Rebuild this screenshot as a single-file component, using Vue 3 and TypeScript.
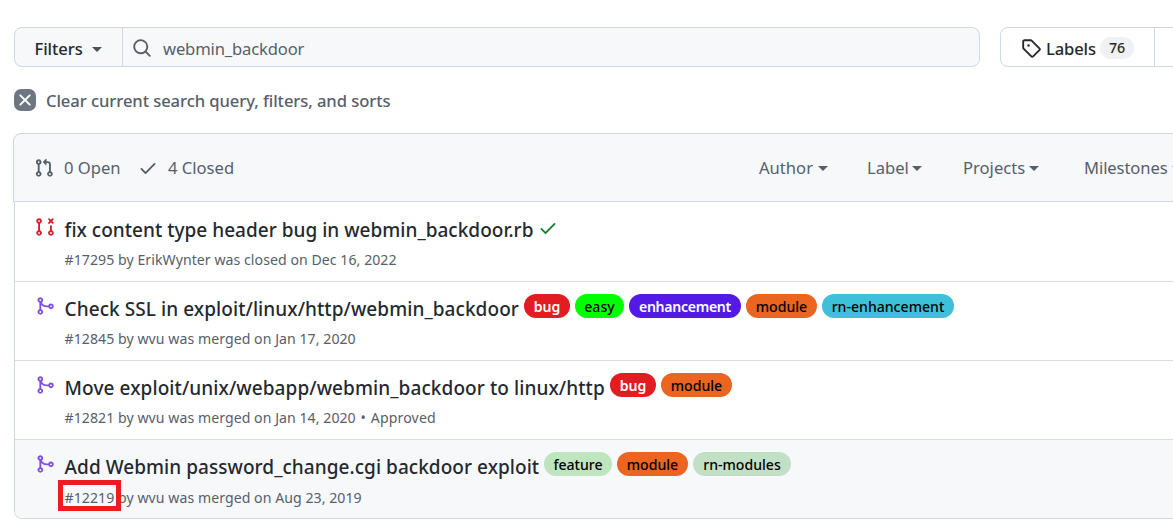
<script setup lang="ts">
interface Tag {
  name: string
  tone: string
}
interface PullRequest {
  id: string
  state: 'closed' | 'merged'
  title: string
  meta: string
  review?: string
  passed?: boolean
  marked?: boolean
  tags: Tag[]
}

const icons = {
  search: 'M10.68 11.74a6 6 0 0 1-7.922-8.982 6 6 0 0 1 8.982 7.922l3.04 3.04a.749.749 0 0 1-.326 1.275.749.749 0 0 1-.734-.215ZM11.5 7a4.499 4.499 0 1 0-8.997 0A4.499 4.499 0 0 0 11.5 7Z',
  tag: 'M1 7.775V2.75C1 1.784 1.784 1 2.75 1h5.025c.464 0 .91.184 1.238.513l6.25 6.25a1.75 1.75 0 0 1 0 2.474l-5.026 5.026a1.75 1.75 0 0 1-2.474 0l-6.25-6.25A1.752 1.752 0 0 1 1 7.775Zm1.5 0c0 .066.026.13.073.177l6.25 6.25a.25.25 0 0 0 .354 0l5.025-5.025a.25.25 0 0 0 0-.354l-6.25-6.25a.25.25 0 0 0-.177-.073H2.75a.25.25 0 0 0-.25.25ZM6 5a1 1 0 1 1 0 2 1 1 0 0 1 0-2Z',
  x: 'M3.72 3.72a.75.75 0 0 1 1.06 0L8 6.94l3.22-3.22a.749.749 0 0 1 1.275.326.749.749 0 0 1-.215.734L9.06 8l3.22 3.22a.749.749 0 0 1-.326 1.275.749.749 0 0 1-.734-.215L8 9.06l-3.22 3.22a.751.751 0 0 1-1.042-.018.751.751 0 0 1-.018-1.042L6.94 8 3.72 4.78a.75.75 0 0 1 0-1.06Z',
  open: 'M1.5 3.25a2.25 2.25 0 1 1 3 2.122v5.256a2.251 2.251 0 1 1-1.5 0V5.372A2.25 2.25 0 0 1 1.5 3.25Zm5.677-.177L9.573.677A.25.25 0 0 1 10 .854V2.5h1A2.5 2.5 0 0 1 13.5 5v5.628a2.251 2.251 0 1 1-1.5 0V5a1 1 0 0 0-1-1h-1v1.646a.25.25 0 0 1-.427.177L7.177 3.427a.25.25 0 0 1 0-.354ZM3.75 2.5a.75.75 0 1 0 0 1.5.75.75 0 0 0 0-1.5Zm0 9.5a.75.75 0 1 0 0 1.5.75.75 0 0 0 0-1.5Zm8.25.75a.75.75 0 1 0 1.5 0 .75.75 0 0 0-1.5 0Z',
  closed: 'M3.25 1A2.25 2.25 0 0 1 4 5.372v5.256a2.251 2.251 0 1 1-1.5 0V5.372A2.251 2.251 0 0 1 3.25 1Zm9.5 5.5a.75.75 0 0 1 .75.75v3.378a2.251 2.251 0 1 1-1.5 0V7.25a.75.75 0 0 1 .75-.75Zm-2.03-5.273a.75.75 0 0 1 1.06 0l.97.97.97-.97a.748.748 0 0 1 1.265.332.75.75 0 0 1-.205.729l-.97.97.97.97a.751.751 0 0 1-.018 1.042.751.751 0 0 1-1.042.018l-.97-.97-.97.97a.749.749 0 0 1-1.275-.326.749.749 0 0 1 .215-.734l.97-.97-.97-.97a.75.75 0 0 1 0-1.06ZM2.5 3.25a.75.75 0 1 0 1.5 0 .75.75 0 0 0-1.5 0ZM3.25 12a.75.75 0 1 0 0 1.5.75.75 0 0 0 0-1.5Zm9.5 0a.75.75 0 1 0 0 1.5.75.75 0 0 0 0-1.5Z',
  merged: 'M5.45 5.154A4.25 4.25 0 0 0 9.25 7.5h1.378a2.251 2.251 0 1 1 0 1.5H9.25A5.734 5.734 0 0 1 5 7.123v3.505a2.25 2.25 0 1 1-1.5 0V5.372a2.25 2.25 0 1 1 1.95-.218ZM4.25 13.5a.75.75 0 1 0 0-1.5.75.75 0 0 0 0 1.5Zm8.5-4.5a.75.75 0 1 0 0-1.5.75.75 0 0 0 0 1.5ZM5 3.25a.75.75 0 1 0-1.5 0 .75.75 0 0 0 1.5 0Z',
  check: 'M13.78 4.22a.75.75 0 0 1 0 1.06l-7.25 7.25a.75.75 0 0 1-1.06 0L2.22 9.28a.751.751 0 0 1 .018-1.042.751.751 0 0 1 1.042-.018L6 10.94l6.72-6.72a.75.75 0 0 1 1.06 0Z',
}

const menus = [
  { name: 'Author', cls: 'author' },
  { name: 'Label', cls: 'label' },
  { name: 'Projects', cls: 'projects' },
  { name: 'Milestones', cls: 'milestones' },
]

const pulls: PullRequest[] = [
  { id: '17295', state: 'closed', title: 'fix content type header bug in webmin_backdoor.rb', meta: 'by ErikWynter was closed on Dec 16, 2022', passed: true, tags: [] },
  {
    id: '12845', state: 'merged', title: 'Check SSL in exploit/linux/http/webmin_backdoor', meta: 'by wvu was merged on Jan 17, 2020',
    tags: [
      { name: 'bug', tone: 'bug' },
      { name: 'easy', tone: 'easy' },
      { name: 'enhancement', tone: 'enhancement' },
      { name: 'module', tone: 'module' },
      { name: 'rn-enhancement', tone: 'rn-enhancement' },
    ],
  },
  {
    id: '12821', state: 'merged', title: 'Move exploit/unix/webapp/webmin_backdoor to linux/http', meta: 'by wvu was merged on Jan 14, 2020', review: '• Approved',
    tags: [
      { name: 'bug', tone: 'bug' },
      { name: 'module', tone: 'module' },
    ],
  },
  {
    id: '12219', state: 'merged', title: 'Add Webmin password_change.cgi backdoor exploit', meta: 'by wvu was merged on Aug 23, 2019', marked: true,
    tags: [
      { name: 'feature', tone: 'feature' },
      { name: 'module', tone: 'module' },
      { name: 'rn-modules', tone: 'rn-modules' },
    ],
  },
]
</script>

<template>
  <main class="page">
    <div class="toolbar">
      <div class="search">
        <button class="filters"><span>Filters</span><i class="caret"></i></button>
        <div class="query">
          <svg class="icon" viewBox="0 0 16 16"><path :d="icons.search" /></svg>
          <span>webmin_backdoor</span>
        </div>
      </div>
      <div class="links">
        <a class="labels">
          <svg class="icon" viewBox="0 0 16 16"><path :d="icons.tag" /></svg>
          <span class="labels-text">Labels</span>
          <span class="count">76</span>
        </a>
      </div>
    </div>

    <a class="clear">
      <span class="clear-badge"><svg viewBox="0 0 16 16"><path :d="icons.x" /></svg></span>
      <span class="clear-text">Clear current search query, filters, and sorts</span>
    </a>

    <section class="list">
      <header class="list-head">
        <svg class="icon" viewBox="0 0 16 16"><path :d="icons.open" /></svg>
        <span class="open-count">0 Open</span>
        <svg class="icon" viewBox="0 0 16 16"><path :d="icons.check" /></svg>
        <span class="closed-count">4 Closed</span>
        <nav class="menus">
          <span v-for="m in menus" :key="m.name" class="menu" :class="m.cls"><span class="menu-name">{{ m.name }}</span><i class="caret"></i></span>
        </nav>
      </header>
      <div class="rows">
        <article v-for="p in pulls" :key="p.id" class="row" :class="['pr-' + p.id, { marked: p.marked }]">
          <svg class="icon state" :class="p.state" viewBox="0 0 16 16"><path :d="icons[p.state]" /></svg>
          <div class="body">
            <div class="headline">
              <span class="title">{{ p.title }}</span>
              <svg v-if="p.passed" class="icon passed" viewBox="0 0 16 16"><path :d="icons.check" /></svg>
              <span v-for="t in p.tags" :key="t.name" class="tag" :class="t.tone">{{ t.name }}</span>
            </div>
            <div class="meta"><span class="number">#{{ p.id }}</span> <span>{{ p.meta }}</span> <span v-if="p.review" class="review">{{ p.review }}</span></div>
          </div>
        </article>
      </div>
    </section>
  </main>
</template>

<style>
html,
body {
  margin: 0;
  overflow: hidden;
  background: #fff;
}
</style>

<style scoped>
.page {
  box-sizing: border-box;
  width: 1173px;
  height: 532px;
  padding-top: 27px;
  overflow: hidden;
  font-family: 'Noto Sans', 'Open Sans', sans-serif;
  font-size: 16.6px;
  color: #24292f;
  white-space: nowrap;
}
.icon {
  display: block;
  flex: none;
  width: 20px;
  height: 20px;
  fill: currentColor;
}
.caret {
  flex: none;
  border: 5px solid transparent;
  border-top-color: currentColor;
  border-bottom: 0;
}
.toolbar {
  display: flex;
  gap: 20px;
  margin-left: 14px;
}
.search {
  box-sizing: border-box;
  display: flex;
  flex: none;
  width: 966px;
  height: 40px;
  border: 1px solid #d0d7de;
  border-radius: 8px;
  background: #f6f8fa;
  overflow: hidden;
}
.filters {
  box-sizing: border-box;
  display: flex;
  align-items: center;
  justify-content: space-between;
  width: 108px;
  padding: 2px 20px 0 19.5px;
  border: 0;
  border-right: 1px solid #d0d7de;
  background: transparent;
  color: #24292f;
  font: 500 16.6px 'Noto Sans', sans-serif;
  letter-spacing: -0.08px;
}
.filters .caret {
  color: #4b535b;
  margin-top: 3px;
}
.query {
  display: flex;
  align-items: center;
  gap: 11px;
  padding: 2px 0 0 9px;
  color: #57606a;
  letter-spacing: -0.15px;
}
.links {
  box-sizing: border-box;
  flex: none;
  display: flex;
  width: 320px;
  height: 40px;
  border: 1px solid #d0d7de;
  border-radius: 8px;
}
.labels {
  box-sizing: border-box;
  display: flex;
  align-items: center;
  width: 154px;
  padding: 2px 0 0 20px;
  border-right: 1px solid #d0d7de;
  font-weight: 500;
}
.labels-text {
  width: 49px;
  margin-left: 5px;
  letter-spacing: -0.15px;
}
.count {
  box-sizing: border-box;
  width: 34px;
  margin-left: 5px;
  border-radius: 11px;
  background: #eff1f3;
  font-size: 14.2px;
  line-height: 22px;
  text-align: center;
}
.clear {
  display: flex;
  align-items: center;
  height: 22px;
  margin: 22px 0 0 14px;
  color: #57606a;
  font-weight: 500;
  letter-spacing: -0.075px;
}
.clear-badge {
  display: flex;
  align-items: center;
  justify-content: center;
  width: 22px;
  height: 22px;
  margin-right: 10px;
  border-radius: 7px;
  background: #6e7781;
}
.clear-badge svg {
  width: 20px;
  height: 20px;
  fill: #fff;
}
.list {
  width: 1300px;
  margin: 22px 0 0 13px;
}
.list-head {
  box-sizing: border-box;
  display: flex;
  align-items: center;
  height: 69px;
  padding-left: 20px;
  border: 1px solid #d0d7de;
  border-radius: 8px 8px 0 0;
  background: #f6f8fa;
  color: #57606a;
}
.open-count {
  width: 64px;
  margin: 0 10px;
}
.closed-count {
  width: 67px;
  margin-left: 10px;
}
.menus {
  display: flex;
  margin-left: 524px;
}
.menu {
  display: flex;
  align-items: center;
  gap: 5px;
}
.menu .caret {
  margin-top: 2px;
}
.author { width: 108px; }
.label { width: 96px; }
.projects { width: 121px; }
.author .menu-name { width: 54px; }
.label .menu-name { width: 40px; }
.projects .menu-name { width: 61px; }
.milestones .menu-name { width: 83px; letter-spacing: -0.1px; }
.rows {
  margin-left: 1px;
  border: 1px solid #d0d7de;
  border-top: 0;
  border-radius: 0 0 8px 8px;
  overflow: hidden;
}
.row {
  box-sizing: border-box;
  display: flex;
  height: 79px;
  border-top: 1px solid #d8dee4;
}
.row:first-child {
  border-top: 0;
}
.marked {
  background: #f6f8fa;
}
.state {
  margin: 14px 0 0 20px;
}
.row:first-child .state {
  margin-top: 15px;
}
.closed { color: #cf222e; }
.merged { color: #8250df; }
.body {
  margin-left: 9.6px;
}
.headline {
  display: flex;
  align-items: flex-start;
  height: 46px;
}
.row:first-child .headline,
.marked .headline {
  height: 47px;
}
.title {
  flex: none;
  margin-top: 13px;
  font-size: 19px;
  font-weight: 500;
  line-height: 28px;
}
.row:first-child .title {
  margin-top: 14px;
}
.pr-17295 .title { width: 468.4px; letter-spacing: 0.02px; }
.pr-12845 .title { width: 454.4px; letter-spacing: 0.07px; }
.pr-12821 .title { width: 540.4px; letter-spacing: 0.085px; }
.pr-12219 .title { width: 474.4px; letter-spacing: 0.05px; }
.passed {
  margin: 16px 0 0 5px;
  color: #1a7f37;
}
.tag {
  box-sizing: border-box;
  flex: none;
  height: 24px;
  margin: 12px 0 0 5px;
  border-radius: 12px;
  font-size: 14.1px;
  font-weight: 500;
  line-height: 25px;
  text-align: center;
  color: #000;
}
.bug { width: 46px; background: #e11d21; color: #fff; font-weight: 600; }
.easy { width: 49px; background: #0f0; }
.enhancement { width: 112px; background: #5319e7; color: #fff; font-weight: 600; letter-spacing: -0.3px; }
.module { width: 71px; background: #eb6420; }
.rn-enhancement { width: 132px; background: #3fc0da; }
.feature { width: 68px; background: #bfe5bf; }
.rn-modules { width: 98px; background: #c2e0c6; }
.meta {
  font-size: 14.1px;
  line-height: 22px;
  color: #57606a;
  letter-spacing: 0.055px;
}
.review {
  margin-left: 1px;
  word-spacing: 1px;
  letter-spacing: 0.15px;
}
.number {
  position: relative;
}
.marked .number::after {
  content: '';
  position: absolute;
  left: -6.6px;
  top: -8px;
  box-sizing: border-box;
  width: 63px;
  height: 31px;
  border: 5px solid #ed1c24;
}
</style>
